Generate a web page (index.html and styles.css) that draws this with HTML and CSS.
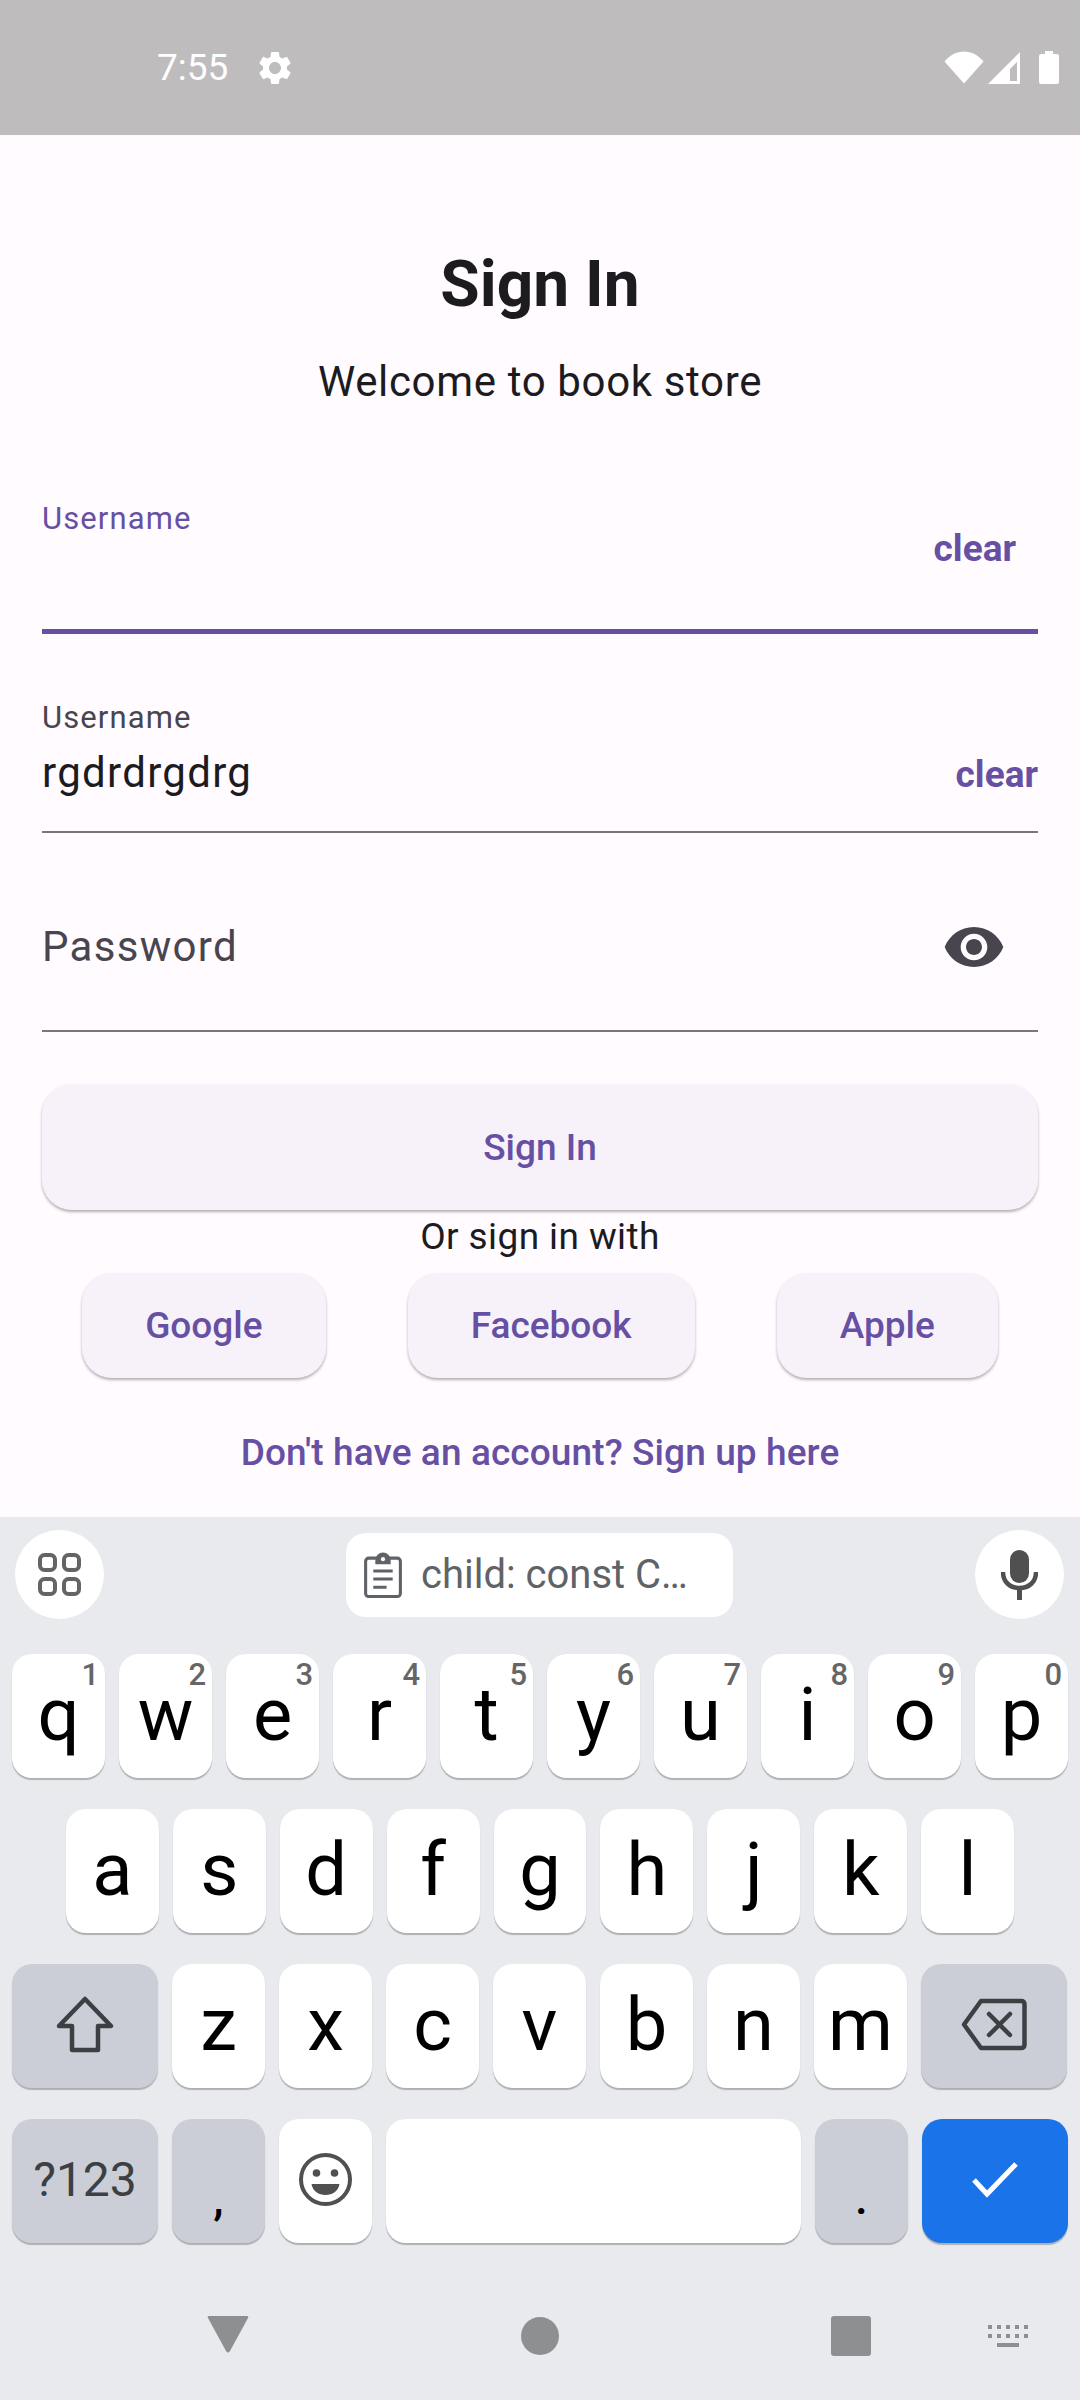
FILE: index.html
```html
<!DOCTYPE html>
<html lang="en">
<head>
    <meta charset="UTF-8">
    <meta name="viewport" content="width=device-width, initial-scale=1.0">
    <title>Sign In</title>
    <link rel="stylesheet" href="styles.css">
</head>
<body>
    <div class="status-bar">
        <span class="status-time">7:55</span>
        <svg class="status-gear" viewBox="0 0 24 24"><path d="M19.14 12.94c.04-.3.06-.61.06-.94 0-.32-.02-.64-.07-.94l2.03-1.58a.49.49 0 0 0 .12-.61l-1.92-3.32a.488.488 0 0 0-.59-.22l-2.39.96c-.5-.38-1.03-.7-1.62-.94l-.36-2.54a.484.484 0 0 0-.48-.41h-3.84c-.24 0-.43.17-.47.41l-.36 2.54c-.59.24-1.13.57-1.62.94l-2.39-.96c-.22-.08-.47 0-.59.22L2.74 8.87c-.12.21-.08.47.12.61l2.03 1.58c-.05.3-.09.63-.09.94s.02.64.07.94l-2.03 1.58a.49.49 0 0 0-.12.61l1.92 3.32c.12.22.37.29.59.22l2.39-.96c.5.38 1.03.7 1.62.94l.36 2.54c.05.24.24.41.48.41h3.84c.24 0 .44-.17.47-.41l.36-2.54c.59-.24 1.13-.56 1.62-.94l2.39.96c.22.08.47 0 .59-.22l1.92-3.32c.12-.22.07-.47-.12-.61l-2.01-1.58zM12 15.6c-1.98 0-3.6-1.62-3.6-3.6s1.62-3.6 3.6-3.6 3.6 1.62 3.6 3.6-1.62 3.6-3.6 3.6z"/></svg>
        <span class="status-right">
            <svg class="status-wifi" viewBox="0 0 40 33"><path d="M20 32.500L0.500 10.500C6 4 12.500 0.500 20 0.500S34 4 39.500 10.500z"/></svg>
            <svg class="status-signal" viewBox="0 0 32 32"><path fill-rule="evenodd" d="M32 0V32H0zM29 10L22 17V29H29z"/></svg>
            <svg class="status-battery" viewBox="0 0 20 33"><path d="M6 0H14V3H18Q20 3 20 5V31Q20 33 18 33H2Q0 33 0 31V5Q0 3 2 3H6z"/></svg>
        </span>
    </div>

    <main class="form">
        <h1 class="form-title">Sign In</h1>
        <p class="form-subtitle">Welcome to book store</p>

        <div class="field field-active">
            <div class="field-main">
                <div class="field-label">Username</div>
            </div>
            <span class="field-clear field-clear-inset">clear</span>
        </div>

        <div class="field">
            <div class="field-main">
                <div class="field-label">Username</div>
                <div class="field-value">rgdrdrgdrg</div>
            </div>
            <span class="field-clear">clear</span>
        </div>

        <div class="field">
            <div class="field-main">
                <div class="field-placeholder">Password</div>
            </div>
            <svg class="field-eye" viewBox="0 0 24 24"><path d="M12 4.500C7 4.500 2.730 7.610 1 12c1.730 4.390 6 7.500 11 7.500s9.270-3.110 11-7.500c-1.730-4.390-6-7.500-11-7.500zM12 17c-2.760 0-5-2.240-5-5s2.240-5 5-5 5 2.240 5 5-2.240 5-5 5zm0-8c-1.660 0-3 1.340-3 3s1.340 3 3 3 3-1.340 3-3-1.340-3-3-3z"/></svg>
        </div>

        <button class="btn btn-wide">Sign In</button>
        <div class="or-text">Or sign in with</div>
        <div class="social-row">
            <button class="btn btn-social">Google</button>
            <button class="btn btn-social">Facebook</button>
            <button class="btn btn-social">Apple</button>
        </div>
        <div class="signup-link">Don't have an account? Sign up here</div>
    </main>

    <div class="keyboard">
        <div class="suggest-row">
            <div class="suggest-circle">
                <svg class="icon-grid" viewBox="0 0 43 43"><g fill="none" stroke="#636466" stroke-width="4"><rect x="2" y="2" width="15" height="15" rx="4.500"/><rect x="26" y="2" width="15" height="15" rx="4.500"/><rect x="2" y="26" width="15" height="15" rx="4.500"/><rect x="26" y="26" width="15" height="15" rx="4.500"/></g></svg>
            </div>
            <div class="suggest-chip">
                <svg class="icon-clip" viewBox="0 0 37 45"><rect x="1.500" y="6" width="34" height="37.500" rx="3" fill="none" stroke="#5f6368" stroke-width="3"/><path fill="#5f6368" d="M11 8a7.500 7.500 0 0 1 15 0v4H11zM9 17H28V20H9zM9 25H28V28H9zM9 33H22V36H9z"/><circle cx="18.500" cy="7" r="2" fill="#fff"/></svg>
                <span class="chip-text">child: const C…</span>
            </div>
            <div class="suggest-circle">
                <svg class="icon-mic" viewBox="0 0 37 50"><rect x="9" y="0" width="19" height="33" rx="9.500" fill="#505050"/><path d="M2 22c0 10 7 16 16.500 16S35 32 35 22" fill="none" stroke="#505050" stroke-width="4.500"/><rect x="16" y="37" width="5" height="13" fill="#505050"/></svg>
            </div>
        </div>

        <div class="key-row">
            <div class="key">q<span class="key-hint">1</span></div>
            <div class="key">w<span class="key-hint">2</span></div>
            <div class="key">e<span class="key-hint">3</span></div>
            <div class="key">r<span class="key-hint">4</span></div>
            <div class="key">t<span class="key-hint">5</span></div>
            <div class="key">y<span class="key-hint">6</span></div>
            <div class="key">u<span class="key-hint">7</span></div>
            <div class="key">i<span class="key-hint">8</span></div>
            <div class="key">o<span class="key-hint">9</span></div>
            <div class="key">p<span class="key-hint">0</span></div>
        </div>
        <div class="key-row key-row-inset">
            <div class="key">a</div>
            <div class="key">s</div>
            <div class="key">d</div>
            <div class="key">f</div>
            <div class="key">g</div>
            <div class="key">h</div>
            <div class="key">j</div>
            <div class="key">k</div>
            <div class="key">l</div>
        </div>
        <div class="key-row">
            <div class="key key-wide key-dark">
                <svg class="icon-shift" viewBox="0 0 58 57"><path d="M29 3L55 30H42V54H16V30H3z" fill="none" stroke="#3c4043" stroke-width="4.500" stroke-linejoin="round"/></svg>
            </div>
            <div class="key">z</div>
            <div class="key">x</div>
            <div class="key">c</div>
            <div class="key">v</div>
            <div class="key">b</div>
            <div class="key">n</div>
            <div class="key">m</div>
            <div class="key key-wide key-dark">
                <svg class="icon-back" viewBox="0 0 66 53"><path d="M20 3H60Q63.500 3 63.500 6.500V46.500Q63.500 50 60 50H20L3 26.500z" fill="none" stroke="#3c4043" stroke-width="4.500" stroke-linejoin="round"/><path d="M28 16L49 37M49 16L28 37" stroke="#3c4043" stroke-width="4.500" stroke-linecap="round"/></svg>
            </div>
        </div>
        <div class="key-row">
            <div class="key key-wide key-dark key-symbols">?123</div>
            <div class="key key-dark key-punct">,</div>
            <div class="key">
                <svg class="icon-emoji" viewBox="0 0 53 53"><circle cx="26.500" cy="26.500" r="24.500" fill="none" stroke="#505050" stroke-width="4"/><circle cx="17.500" cy="20" r="3.800" fill="#505050"/><circle cx="35.500" cy="20" r="3.800" fill="#505050"/><path d="M12.500 31H40.500C39 38.500 33.500 42 26.500 42S14 38.500 12.500 31z" fill="#505050"/></svg>
            </div>
            <div class="key key-space"></div>
            <div class="key key-dark key-punct">.</div>
            <div class="key key-wide key-enter">
                <svg class="icon-check" viewBox="0 0 46 36"><path d="M2 18L15 32L44 2" fill="none" stroke="#fff" stroke-width="5"/></svg>
            </div>
        </div>

        <div class="nav-row">
            <svg class="nav-back" viewBox="0 0 42 37"><path d="M2 0H40Q42 0 41 2L23 35Q21 38 19 35L1 2Q0 0 2 0z"/></svg>
            <span class="nav-home"></span>
            <span class="nav-recent"></span>
            <svg class="nav-kb" viewBox="0 0 40 22"><path d="M0 0H4V4H0zM9 0H13V4H9zM18 0H22V4H18zM27 0H31V4H27zM36 0H40V4H36zM0 9H4V13H0zM9 9H13V13H9zM18 9H22V13H18zM27 9H31V13H27zM36 9H40V13H36zM9 18H31V22H9z"/></svg>
        </div>
    </div>
</body>
</html>
```

FILE: styles.css
```css
:root {
    --purple: #6750a4;
    --text: #1c1b1f;
    --muted: #49454f;
    --line: #79747e;
    --page: #fffbfe;
    --btn: #f7f2fa;
    --kb-bg: #e8eaed;
    --key-dark: #cbced6;
}

* {
    box-sizing: border-box;
}

body {
    margin: 0;
    width: 1080px;
    height: 2400px;
    overflow: hidden;
    background: var(--page);
    font-family: Roboto, "Noto Sans", sans-serif;
    display: flex;
    flex-direction: column;
}

/* status bar */
.status-bar {
    height: 135px;
    background: #bebcbd;
    display: flex;
    align-items: center;
    padding: 0 20px 0 157px;
    color: #fff;
    fill: #fff;
}

.status-time {
    font-size: 37px;
    width: 98px;
}

.status-gear {
    width: 40px;
    height: 40px;
}

.status-right {
    margin-left: auto;
    display: flex;
    align-items: center;
}

.status-wifi {
    width: 40px;
    height: 33px;
}

.status-signal {
    width: 32px;
    height: 32px;
    margin-left: 4px;
}

.status-battery {
    width: 22px;
    height: 33px;
    margin-left: 18px;
}

/* form */
.form {
    flex: 1;
    padding: 110px 42px 0;
    color: var(--text);
}

.form-title {
    margin: 0;
    font-size: 64px;
    line-height: 80px;
    font-weight: 700;
    text-align: center;
}

.form-subtitle {
    margin: 27px 0 87px;
    font-size: 42px;
    line-height: 60px;
    letter-spacing: 0.65px;
    text-align: center;
}

.field {
    height: 135px;
    margin-top: 64px;
    border-bottom: 2px solid var(--line);
    display: flex;
    justify-content: space-between;
    align-items: flex-start;
}

.form-subtitle + .field {
    margin-top: 0;
}

.field-active {
    border-bottom: 5px solid var(--purple);
}

.field-label {
    font-size: 31px;
    line-height: 40px;
    letter-spacing: 1.1px;
    color: var(--muted);
}

.field-active .field-label {
    color: var(--purple);
}

.field-value {
    font-size: 42px;
    line-height: 70px;
    letter-spacing: 1.3px;
}

.field-placeholder {
    font-size: 42px;
    line-height: 100px;
    letter-spacing: 1.3px;
    color: var(--muted);
}

.field-clear {
    font-size: 37px;
    font-weight: 700;
    line-height: 50px;
    margin-top: 52px;
    color: var(--purple);
}

.field-clear-inset {
    margin-top: 25px;
    margin-right: 22px;
}

.field-eye {
    width: 64px;
    height: 64px;
    margin: 18px 32px 0 0;
    fill: var(--muted);
}

.btn {
    display: block;
    border: none;
    background: var(--btn);
    color: var(--purple);
    font-family: inherit;
    font-size: 37px;
    font-weight: 500;
    border-radius: 30px;
    box-shadow: 0 2px 3px rgba(0, 0, 0, 0.3);
}

.btn-wide {
    width: 100%;
    height: 126px;
    margin-top: 52px;
}

.or-text {
    font-size: 37px;
    line-height: 54px;
    letter-spacing: 0.4px;
    text-align: center;
}

.social-row {
    margin: 9px -42px 0;
    display: flex;
    justify-content: space-evenly;
}

.btn-social {
    height: 105px;
    padding: 0 63px;
}

.signup-link {
    margin-top: 50px;
    font-size: 37px;
    line-height: 50px;
    letter-spacing: 0.1px;
    font-weight: 500;
    text-align: center;
    color: var(--purple);
}

/* keyboard */
.keyboard {
    height: 883px;
    background: var(--kb-bg);
    padding-top: 13px;
}

.suggest-row {
    height: 89px;
    margin-bottom: 35px;
    padding: 0 16px 0 15px;
    display: flex;
    justify-content: space-between;
    align-items: center;
}

.suggest-circle {
    width: 89px;
    height: 89px;
    border-radius: 50%;
    background: #fff;
    display: flex;
    align-items: center;
    justify-content: center;
}

.icon-grid {
    width: 43px;
    height: 43px;
}

.icon-mic {
    width: 37px;
    height: 50px;
}

.suggest-chip {
    width: 387px;
    height: 84px;
    border-radius: 20px;
    background: #fff;
    display: flex;
    align-items: center;
    padding-left: 18px;
}

.icon-clip {
    width: 38px;
    height: 46px;
}

.chip-text {
    margin-left: 19px;
    font-size: 40px;
    color: #5f6368;
    white-space: nowrap;
}

.key-row {
    height: 124px;
    margin-bottom: 31px;
    padding: 0 12px;
    display: flex;
    gap: 14px;
}

.key-row-inset {
    padding: 0 66px;
}

.key {
    position: relative;
    width: 93px;
    height: 124px;
    padding-bottom: 3px;
    border-radius: 20px;
    background: #fff;
    color: #000;
    font-size: 74px;
    line-height: 114px;
    text-align: center;
    box-shadow: 0 2px 1px rgba(0, 0, 0, 0.25);
    display: flex;
    align-items: center;
    justify-content: center;
}

.key-hint {
    position: absolute;
    top: 1px;
    right: 6px;
    font-size: 31px;
    line-height: 40px;
    font-weight: 500;
    color: #666;
}

.key-wide {
    width: 146px;
}

.key-dark {
    background: var(--key-dark);
}

.key-symbols {
    font-size: 48px;
    color: #3c4043;
}

.key-punct {
    font-size: 46px;
    line-height: 84px;
    font-weight: 500;
    align-items: flex-end;
}

.key-space {
    flex: 1;
}

.key-enter {
    background: #1a73e8;
}

.icon-shift {
    width: 58px;
    height: 57px;
}

.icon-back {
    width: 66px;
    height: 53px;
}

.icon-emoji {
    width: 53px;
    height: 53px;
}

.icon-check {
    width: 46px;
    height: 36px;
}

/* nav bar */
.nav-row {
    height: 76px;
    margin-top: 55px;
    padding-left: 207px;
    display: flex;
    align-items: center;
    fill: #8e8f91;
}

.nav-back {
    width: 42px;
    height: 37px;
    margin-bottom: 4px;
}

.nav-home {
    width: 38px;
    height: 38px;
    margin-left: 272px;
    border-radius: 50%;
    background: #8e8f91;
}

.nav-recent {
    width: 40px;
    height: 40px;
    margin-left: 272px;
    border-radius: 3px;
    background: #8e8f91;
}

.nav-kb {
    width: 40px;
    height: 22px;
    margin-left: 117px;
}
```
